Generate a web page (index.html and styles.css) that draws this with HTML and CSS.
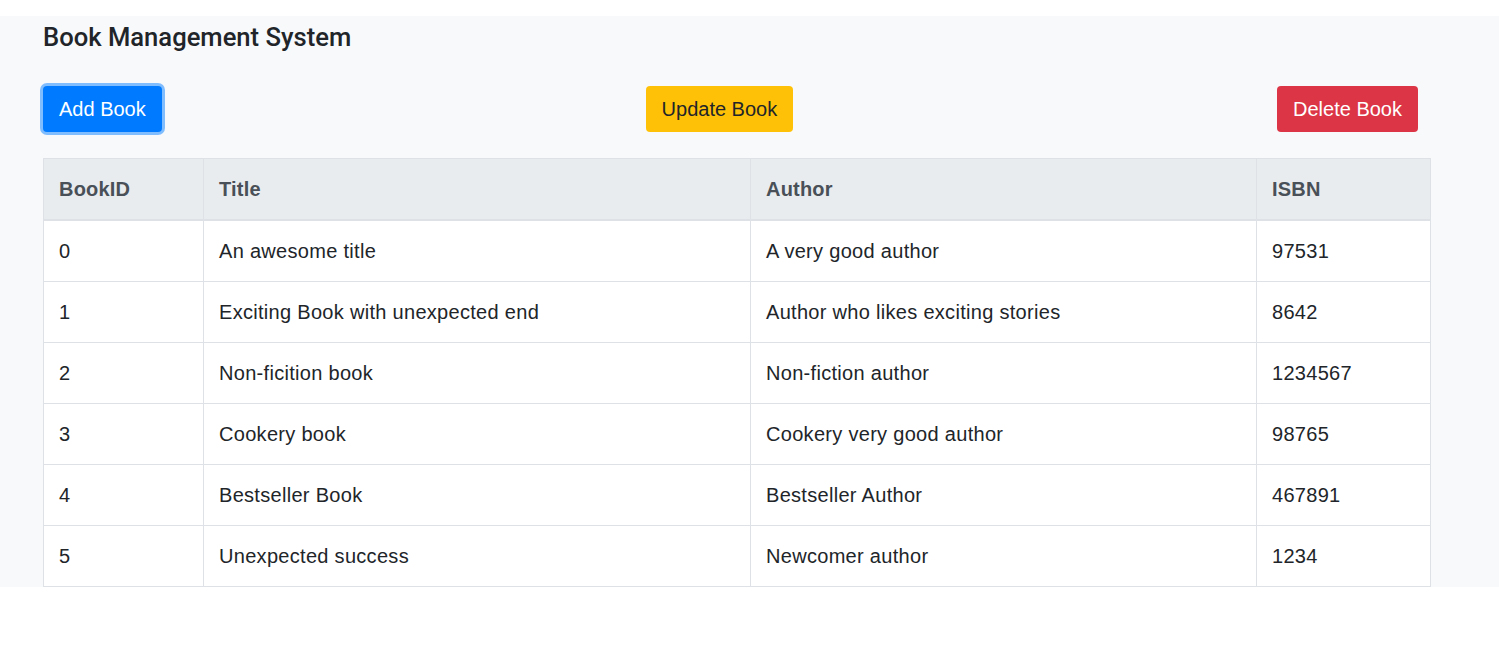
FILE: index.html
```html
<!DOCTYPE html>
<html>
<head>
<meta charset="utf-8">
<link rel="stylesheet" href="styles.css">
</head>
<body>
<div class="page">
  <h1 class="title">Book Management System</h1>
  <div class="actions">
    <button class="btn btn-add">Add Book</button>
    <button class="btn btn-update">Update Book</button>
    <button class="btn btn-delete">Delete Book</button>
  </div>
  <table class="books">
    <colgroup>
      <col class="c-id"><col class="c-title"><col class="c-author"><col class="c-isbn">
    </colgroup>
    <thead>
      <tr><th>BookID</th><th>Title</th><th>Author</th><th>ISBN</th></tr>
    </thead>
    <tbody>
      <tr><td>0</td><td>An awesome title</td><td>A very good author</td><td>97531</td></tr>
      <tr><td>1</td><td>Exciting Book with unexpected end</td><td>Author who likes exciting stories</td><td>8642</td></tr>
      <tr><td>2</td><td>Non-ficition book</td><td>Non-fiction author</td><td>1234567</td></tr>
      <tr><td>3</td><td>Cookery book</td><td>Cookery very good author</td><td>98765</td></tr>
      <tr><td>4</td><td>Bestseller Book</td><td>Bestseller Author</td><td>467891</td></tr>
      <tr><td>5</td><td>Unexpected success</td><td>Newcomer author</td><td>1234</td></tr>
    </tbody>
  </table>
</div>
</body>
</html>
```
FILE: styles.css
```css
html, body {
  margin: 0;
  padding: 0;
  background: #ffffff;
}
body {
  font-family: "Liberation Sans", Arial, sans-serif;
  font-size: 20px;
  color: #212529;
}
.page {
  margin-top: 16px;
  background: #f8f9fa;
  padding: 0 0 0 43px;
  display: flex;
  flex-direction: column;
  align-items: flex-start;
}
.title {
  font-family: Roboto, "Liberation Sans", sans-serif;
  font-weight: 500;
  font-size: 25.6px;
  line-height: 34px;
  margin: 4px 0 0 0;
  color: #212529;
}
.actions {
  display: flex;
  justify-content: space-between;
  align-items: flex-start;
  width: 1375px;
  margin-top: 32px;
}
.btn {
  font-family: "Liberation Sans", Arial, sans-serif;
  font-size: 20px;
  line-height: 30px;
  padding: 8px 16px;
  border: 0;
  border-radius: 4px;
  white-space: nowrap;
  cursor: pointer;
}
.btn-add {
  background: #007bff;
  color: #fff;
  box-shadow: 0 0 0 3px #80bdff;
}
.btn-update {
  background: #ffc107;
  color: #212529;
}
.btn-delete {
  background: #dc3545;
  color: #fff;
}
.books {
  margin-top: 26px;
  border-collapse: collapse;
  width: 1387px;
  table-layout: fixed;
  background: #fff;
}
.c-id { width: 160px; }
.c-title { width: 547px; }
.c-author { width: 506px; }
.c-isbn { width: 174px; }
.books th, .books td {
  border: 1px solid #dee2e6;
  padding: 15px 15px;
  line-height: 30px;
  text-align: left;
  vertical-align: top;
}
.books th {
  background: #e9ecef;
  color: #495057;
  font-weight: bold;
  letter-spacing: 0.2px;
  border-bottom-width: 2px;
}
.books td {
  color: #212529;
  letter-spacing: 0.3px;
}
```
